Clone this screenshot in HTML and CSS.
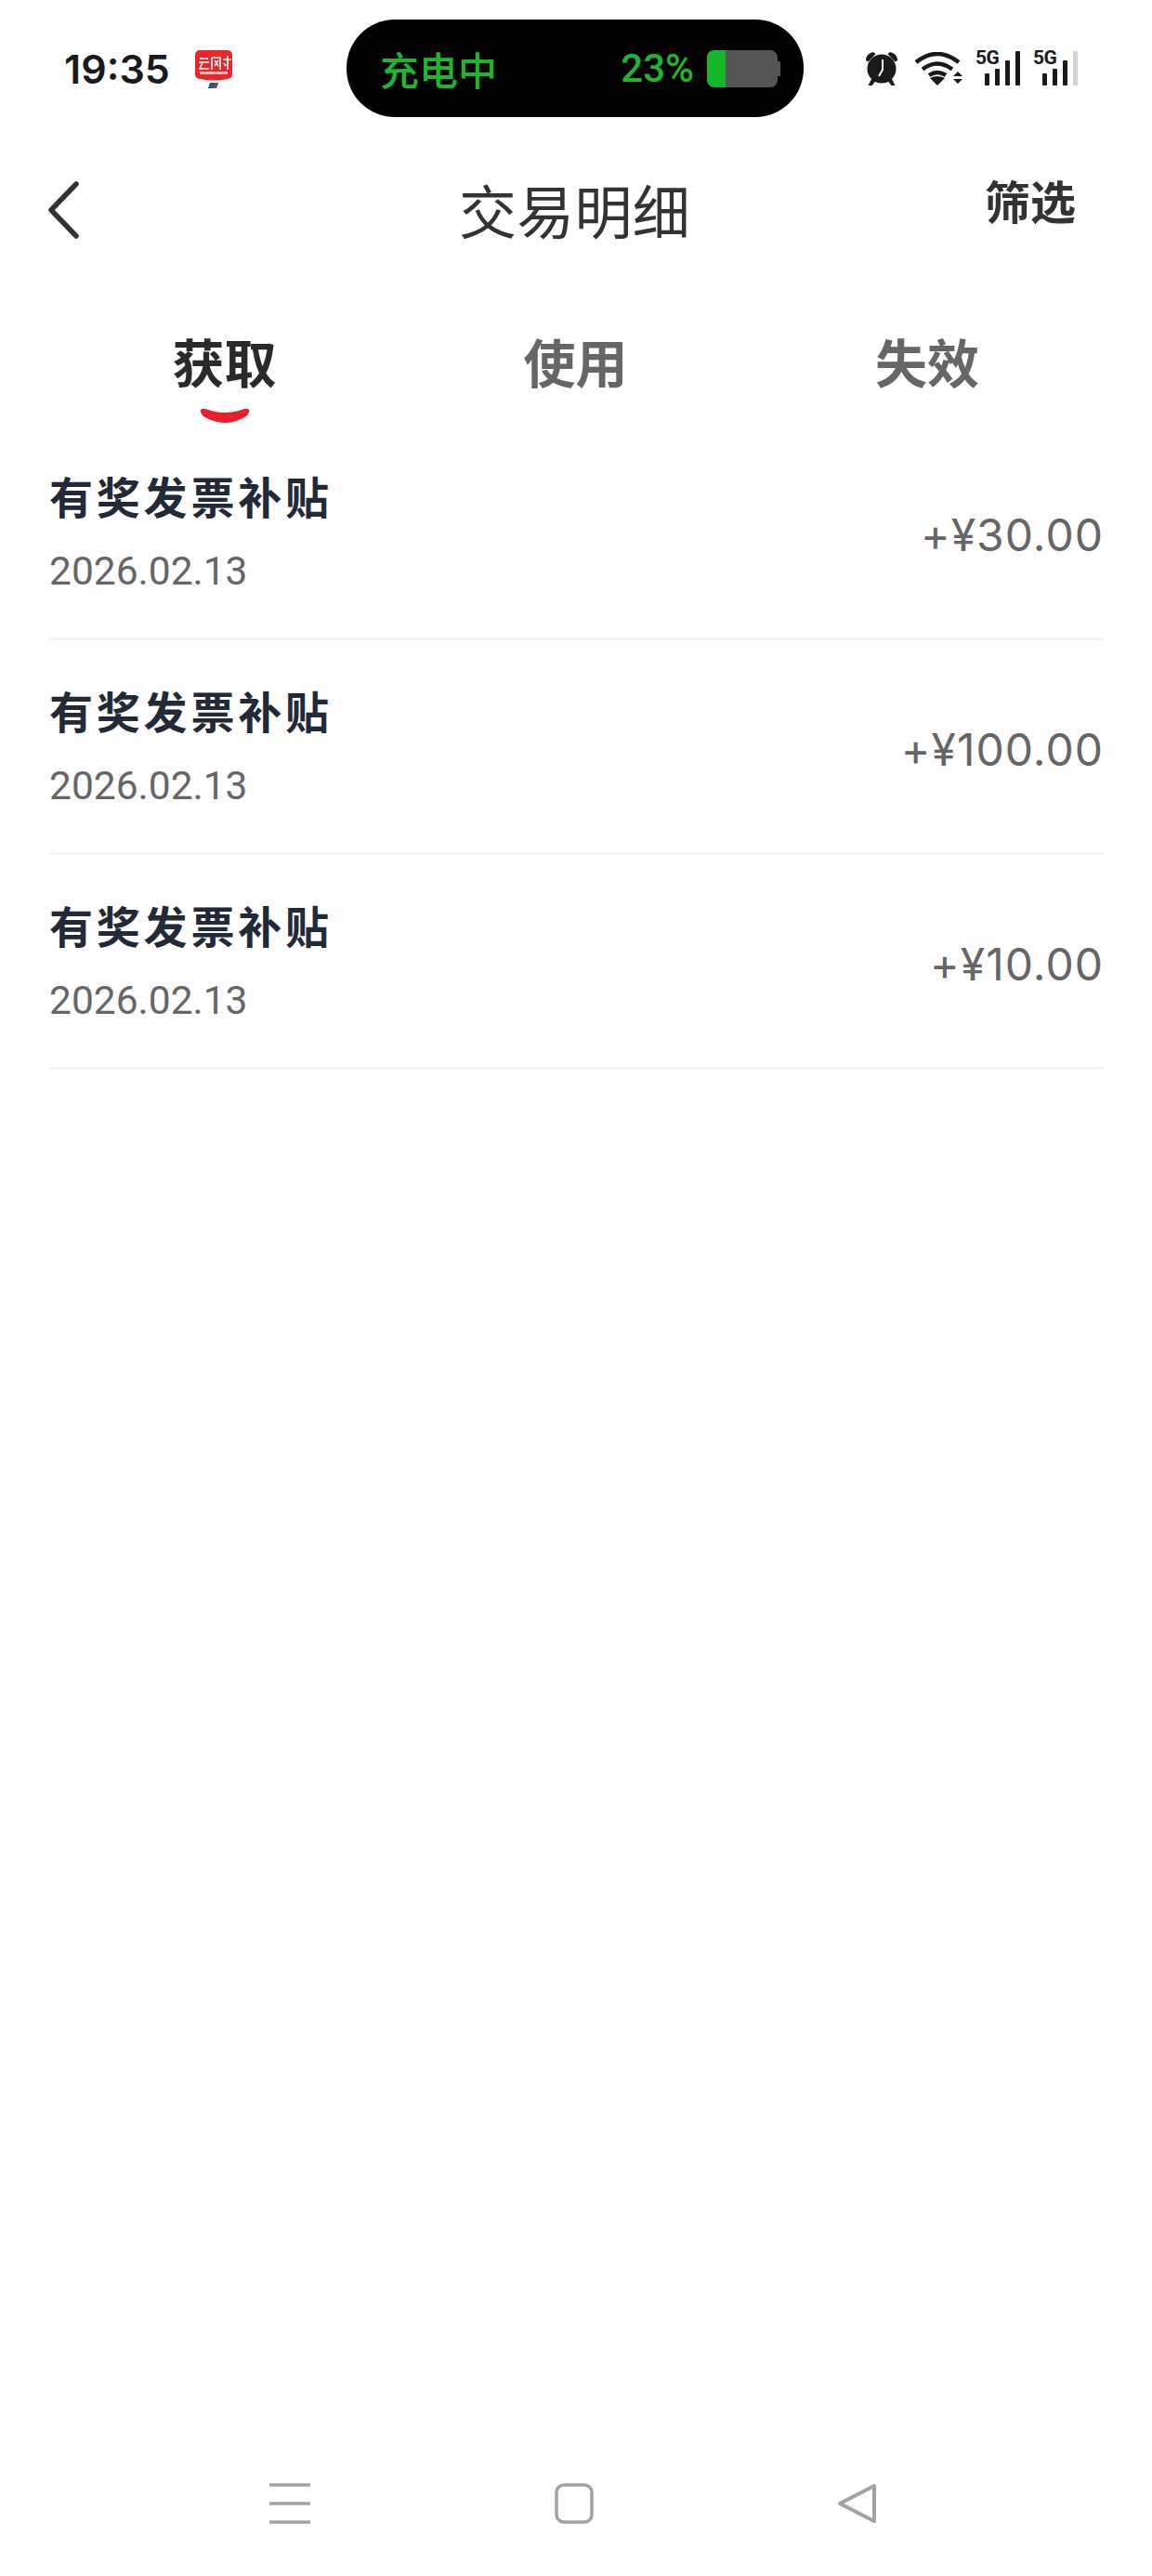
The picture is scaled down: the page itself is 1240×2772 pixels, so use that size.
FILE: index.html
```html
<!DOCTYPE html>
<html lang="zh-CN">

<head>
    <meta charset="UTF-8">
    <meta name="viewport" content="width=device-width, initial-scale=1.0">
    <title>交易明细</title>
    <link rel="stylesheet" href="styles.css">
</head>

<body>
    <div class="phone">
        <div class="status-bar">
            <div class="status-left">
                <span class="clock">19:35</span>
                <svg class="app-icon" width="42" height="42" viewBox="0 0 42 42">
                    <path d="M6 1h30a5 5 0 0 1 5 5v21q0 4-5 5-15 3-30 0-5-1-5-5V6a5 5 0 0 1 5-5z" fill="#e8272a" />
                    <path d="M6 10h9M5 14h11M9 14l-3 7h10M19 9h9v13M19 9v13M22 12l4 6M26 12l-4 6M31 11h9M36 7v15M32 15l2 3" stroke="#fff" stroke-width="1.6" fill="none" />
                    <rect x="6" y="24" width="30" height="3" fill="#f9b8b8" />
                    <path d="M17 36h9l-2 6h-9z" fill="#1c5c7c" />
                    <path d="M22 36h4l-2 6h-4z" fill="#c33" opacity="0.5" />
                </svg>
            </div>
            <div class="island">
                <span class="charging">充电中</span>
                <div class="battery-wrap">
                    <span class="percent">23%</span>
                    <div class="battery">
                        <div class="battery-fill"></div>
                        <div class="battery-cap"></div>
                    </div>
                </div>
            </div>
            <div class="status-right">
                <svg width="40" height="38" viewBox="0 0 40 38">
                    <circle cx="18" cy="19" r="15.5" fill="#1a1a1a" />
                    <path d="M1 10q0-7 8-9l2.500 2-8 8.500zM35 10q0-7-8-9l-2.500 2 8 8.500z" fill="#1a1a1a" />
                    <path d="M7 30l-3.500 7h4l4-5zM29 30l3.500 7h-4l-4-5z" fill="#1a1a1a" />
                    <path d="M19 9v11l-4 7" stroke="#fff" stroke-width="2" fill="none" />
                </svg>
                <svg width="51" height="36" viewBox="0 0 51 36">
                    <path d="M1 11q23-18 46 0M8 18.500q16-12 32 0M15 25q9-6 18 0" stroke="#1a1a1a" stroke-width="4.500" fill="none" />
                    <path d="M16 28q8-4 16 0l-8 8z" fill="#1a1a1a" />
                    <path d="M46 21l5 5H41zM41 29h10l-5 5z" fill="#1a1a1a" />
                </svg>
                <div class="signal">
                    <span class="five-g">5G</span>
                    <i class="bar b1"></i><i class="bar b2"></i><i class="bar b3"></i><i class="bar b4"></i>
                </div>
                <div class="signal">
                    <span class="five-g">5G</span>
                    <i class="bar b1"></i><i class="bar b2"></i><i class="bar b3"></i><i class="bar b4 off"></i>
                </div>
            </div>
        </div>

        <div class="nav-bar">
            <svg class="back" width="36" height="62" viewBox="0 0 36 62">
                <path d="M32 3L5 31l27 28" stroke="#333" stroke-width="5.500" fill="none" stroke-linecap="round" stroke-linejoin="round" />
            </svg>
            <h1 class="nav-title">交易明细</h1>
            <span class="filter">筛选</span>
        </div>

        <div class="tabs">
            <div class="tab active">获取
                <svg class="smile" width="56" height="22" viewBox="0 0 56 22">
                    <path d="M2 4q2-2 5-1 21 8 42 0 3-1 5 1 1 3-3 7-23 14-46 0-4-4-3-7z" fill="#e5202a" />
                </svg>
            </div>
            <div class="tab">使用</div>
            <div class="tab">失效</div>
        </div>

        <div class="list">
            <div class="row">
                <div>
                    <div class="row-title">有奖发票补贴</div>
                    <div class="row-date">2026.02.13</div>
                </div>
                <div class="row-amount">+¥30.00</div>
            </div>
            <div class="row">
                <div>
                    <div class="row-title">有奖发票补贴</div>
                    <div class="row-date">2026.02.13</div>
                </div>
                <div class="row-amount">+¥100.00</div>
            </div>
            <div class="row">
                <div>
                    <div class="row-title">有奖发票补贴</div>
                    <div class="row-date">2026.02.13</div>
                </div>
                <div class="row-amount">+¥10.00</div>
            </div>
        </div>

        <div class="home-bar">
            <svg width="44" height="44" viewBox="0 0 44 44">
                <path d="M0 2h44M0 22h44M0 42h44" stroke="#a3a3a3" stroke-width="3.500" />
            </svg>
            <svg width="42" height="44" viewBox="0 0 42 44">
                <rect x="2" y="2" width="38" height="40" rx="8" stroke="#a3a3a3" stroke-width="3.500" fill="none" />
            </svg>
            <svg width="44" height="44" viewBox="0 0 44 44">
                <path d="M40 3L3 22l37 19z" stroke="#a3a3a3" stroke-width="4" fill="none" stroke-linejoin="round" />
            </svg>
        </div>
    </div>
</body>

</html>
```

FILE: styles.css
```css
* {
    box-sizing: border-box;
}

body {
    margin: 0;
    background-color: #fff;
    font-family: "Noto Sans CJK SC", "Noto Sans", sans-serif;
}

.phone {
    width: 1240px;
    height: 2772px;
    display: flex;
    flex-direction: column;
}

.status-bar {
    height: 148px;
    padding: 21px 0 0 69px;
    display: flex;
    align-items: flex-start;
}

.status-left {
    width: 304px;
    height: 105px;
    display: flex;
    align-items: center;
    gap: 26px;
}

.clock {
    font-family: Inter, sans-serif;
    font-size: 43px;
    font-weight: 600;
    color: #1a1a1a;
}

.island {
    width: 492px;
    height: 105px;
    padding: 0 28px 0 36px;
    background-color: #000;
    border-radius: 52px;
    display: flex;
    align-items: center;
    justify-content: space-between;
}

.charging {
    font-size: 42px;
    font-weight: 500;
    color: #1fb52f;
}

.battery-wrap {
    display: flex;
    align-items: center;
    gap: 14px;
}

.percent {
    font-family: Roboto, sans-serif;
    font-size: 42px;
    font-weight: 500;
    color: #1fb52f;
}

.battery {
    width: 76px;
    height: 40px;
    background-color: #555;
    border-radius: 8px;
    position: relative;
}

.battery-fill {
    width: 20px;
    height: 100%;
    background-color: #12b826;
    border-radius: 8px 0 0 8px;
}

.battery-cap {
    position: absolute;
    right: -3px;
    top: 12px;
    width: 3px;
    height: 16px;
    background-color: #555;
}

.status-right {
    height: 105px;
    margin-left: 66px;
    display: flex;
    align-items: center;
    gap: 14px;
}

.signal {
    width: 48px;
    height: 37px;
    display: flex;
    align-items: flex-end;
    justify-content: flex-end;
    gap: 6px;
    position: relative;
}

.five-g {
    position: absolute;
    left: 0;
    top: -5px;
    font-family: Roboto, sans-serif;
    font-size: 21px;
    font-weight: 700;
    letter-spacing: -0.5px;
    color: #1a1a1a;
}

.bar {
    width: 5px;
    background-color: #1a1a1a;
    border-radius: 1px;
}

.b1 { height: 13px; }
.b2 { height: 18px; }
.b3 { height: 27px; }
.b4 { height: 37px; }

.bar.off {
    background-color: #d4d4d4;
}

.nav-bar {
    height: 160px;
    padding: 0 82px 0 50px;
    display: flex;
    align-items: center;
    justify-content: space-between;
    position: relative;
}

.back {
    margin-top: -4px;
}

.nav-title {
    margin: 0;
    position: absolute;
    left: 0;
    right: 3px;
    top: 0;
    text-align: center;
    line-height: 154px;
    font-size: 62px;
    font-weight: 400;
    letter-spacing: 0.3px;
    color: #333;
}

.filter {
    margin-top: -28px;
    font-size: 49px;
    font-weight: 700;
    color: #333;
}

.tabs {
    height: 148px;
    padding-top: 43px;
    display: grid;
    grid-template-columns: 483px 273px 484px;
}

.tab {
    text-align: center;
    font-size: 56px;
    font-weight: 700;
    line-height: 74px;
    color: #666;
    position: relative;
}

.tab.active {
    color: #2a2a2a;
}

.smile {
    position: absolute;
    left: 214px;
    top: 86px;
}

.list {
    margin: 2px 52px 0 53px;
}

.row {
    height: 231px;
    display: flex;
    align-items: center;
    justify-content: space-between;
    border-bottom: 3px solid #f4f4f4;
}

.row-title {
    font-size: 47px;
    font-weight: 700;
    letter-spacing: 3.8px;
    line-height: 64px;
    color: #222a38;
}

.row-date {
    margin-top: 22px;
    font-family: Roboto, sans-serif;
    font-size: 42.5px;
    line-height: 56px;
    color: #666;
}

.row-amount {
    margin-top: 6px;
    font-family: Inter, sans-serif;
    font-size: 48px;
    font-weight: 400;
    letter-spacing: 1px;
    color: #666;
}

.home-bar {
    margin-top: auto;
    height: 100px;
    padding: 0 295px 56px 290px;
    display: flex;
    align-items: center;
    justify-content: space-between;
}
```
